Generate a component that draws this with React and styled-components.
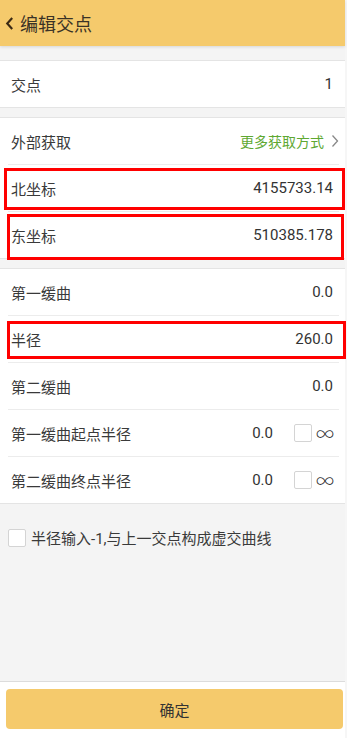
import styled, { createGlobalStyle } from "styled-components";

const GlobalStyle = createGlobalStyle`
  html, body {
    margin: 0;
    padding: 0;
    background: #f6f6f6;
  }
  body {
    font-family: Roboto, "Noto Sans CJK SC", "Noto Sans", sans-serif;
    color: #333;
  }
`;

function CheckBox() {
  return <Box />;
}

function App() {
  return (
    <>
      <GlobalStyle />
      <Page>
        <Header>
          <BackIcon viewBox="0 0 10 16">
            <path d="M8 2 L2.5 8 L8 14" fill="none" stroke="#3b2a14" strokeWidth="2.4" />
          </BackIcon>
          <Title>编辑交点</Title>
        </Header>

        <Content>
          <Group>
            <Row>
              <Label>交点</Label>
              <Value>1</Value>
            </Row>
          </Group>

          <Group>
            <Row>
              <Label>外部获取</Label>
              <MoreLink>
                更多获取方式
                <svg width="8" height="14" viewBox="0 0 8 14">
                  <path d="M1.5 1.5 L6.5 7 L1.5 12.5" fill="none" stroke="#888" strokeWidth="1.3" />
                </svg>
              </MoreLink>
            </Row>
            <Row divider>
              <Label>北坐标</Label>
              <Value>4155733.14</Value>
              <Highlight $top={3} $bottom={1} $left={4} $right={0} />
            </Row>
            <Row divider>
              <Label>东坐标</Label>
              <Value>510385.178</Value>
              <Highlight $top={2} $bottom={-2} $left={7} $right={1} />
            </Row>
          </Group>

          <Group>
            <Row>
              <Label>第一缓曲</Label>
              <Value>0.0</Value>
            </Row>
            <Row divider>
              <Label>半径</Label>
              <Value>260.0</Value>
              <Highlight $top={5} $bottom={3} $left={7} $right={-1} />
            </Row>
            <Row divider>
              <Label>第二缓曲</Label>
              <Value>0.0</Value>
            </Row>
            <Row divider>
              <Label>第一缓曲起点半径</Label>
              <Right>
                <Value>0.0</Value>
                <InfinityPick>
                  <CheckBox />
                  <Infinity>∞</Infinity>
                </InfinityPick>
              </Right>
            </Row>
            <Row divider>
              <Label>第二缓曲终点半径</Label>
              <Right>
                <Value>0.0</Value>
                <InfinityPick>
                  <CheckBox />
                  <Infinity>∞</Infinity>
                </InfinityPick>
              </Right>
            </Row>
          </Group>

          <OptionRow>
            <CheckBox />
            <OptionText>半径输入-1,与上一交点构成虚交曲线</OptionText>
          </OptionRow>
        </Content>

        <Footer>
          <ConfirmButton>确定</ConfirmButton>
        </Footer>
      </Page>
    </>
  );
}

export default App;

const Page = styled.div`
  width: 345px;
  min-height: 100vh;
  display: flex;
  flex-direction: column;
  background: #f4f4f4;
`;

const Header = styled.header`
  height: 46px;
  display: flex;
  align-items: center;
  gap: 6px;
  padding-left: 5px;
  background: #f5ca6c;
  box-shadow: 0 1px 3px rgba(0, 0, 0, 0.12);
  position: relative;
  z-index: 1;
`;

const BackIcon = styled.svg`
  width: 9px;
  height: 15px;
`;

const Title = styled.h1`
  margin: 0;
  font-size: 18px;
  font-weight: 400;
  color: #3a3226;
`;

const Content = styled.main`
  flex: 1;
  padding-top: 14px;
`;

const Group = styled.section`
  background: #fff;
  border-top: 1px solid #e4e4e4;
  border-bottom: 1px solid #e4e4e4;
  margin-bottom: 9px;
`;

const Row = styled.div`
  position: relative;
  height: 46px;
  display: flex;
  align-items: center;
  justify-content: space-between;
  padding: 0 12px 0 11px;
  border-top: ${(p) => (p.divider ? "1px solid transparent" : "none")};

  &::before {
    content: "";
    display: ${(p) => (p.divider ? "block" : "none")};
    position: absolute;
    top: -1px;
    left: 8px;
    right: 6px;
    height: 1px;
    background: #ececec;
  }
`;

const Highlight = styled.span`
  position: absolute;
  top: ${(p) => p.$top}px;
  bottom: ${(p) => p.$bottom}px;
  left: ${(p) => p.$left}px;
  right: ${(p) => p.$right}px;
  border: 3px solid #f00;
  pointer-events: none;
`;

const Label = styled.span`
  font-size: 15px;
  color: #3a3a3a;
`;

const Value = styled.span`
  font-size: 15px;
  color: #333;
`;

const MoreLink = styled.span`
  display: flex;
  align-items: center;
  gap: 7px;
  font-size: 14px;
  color: #5ea832;
  margin-right: -6px;
`;

const Right = styled.div`
  display: flex;
  align-items: center;
  gap: 21px;
`;

const InfinityPick = styled.div`
  display: flex;
  align-items: center;
  gap: 4px;
  margin-right: -1px;
`;

const Box = styled.span`
  display: inline-block;
  width: 16px;
  height: 16px;
  border: 1px solid #d4d4d4;
  border-radius: 2px;
  background: #fff;
`;

const Infinity = styled.span`
  font-family: "Noto Sans CJK SC", sans-serif;
  font-weight: 300;
  font-size: 18px;
  line-height: 1;
  color: #333;
`;

const OptionRow = styled.div`
  display: flex;
  align-items: center;
  gap: 5px;
  padding: 14px 8px;
`;

const OptionText = styled.span`
  font-size: 15px;
  color: #3a3a3a;
`;

const Footer = styled.footer`
  background: #fff;
  border-top: 1px solid #dcdcdc;
  padding: 7px 2px 9px 6px;
`;

const ConfirmButton = styled.button`
  width: 100%;
  height: 40px;
  border: none;
  border-radius: 4px;
  background: #f5ca6c;
  font-family: inherit;
  font-size: 15px;
  color: #333;
`;
